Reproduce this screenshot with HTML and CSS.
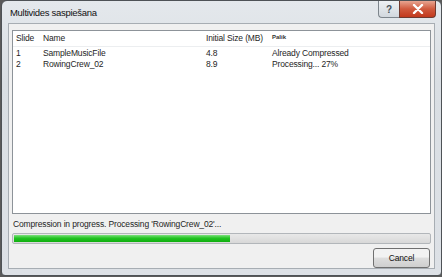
FILE: index.html
```html
<!DOCTYPE html>
<html>
<head>
<meta charset="utf-8">
<link rel="stylesheet" href="styles.css">
</head>
<body>
<div class="window">
  <div class="titlebar">
    <div class="title">Multivides saspiešana</div>
    <div class="caption-buttons">
      <div class="cap-btn help">?</div>
      <div class="cap-btn close">
        <svg width="12" height="10" viewBox="0 0 12 10"><path d="M2 1 L10 9 M10 1 L2 9" stroke="#fff" stroke-width="2.4" stroke-linecap="round"/></svg>
      </div>
    </div>
  </div>
  <div class="client">
    <div class="listbox">
      <div class="row header">
        <span class="c-slide">Slide</span>
        <span class="c-name">Name</span>
        <span class="c-size">Initial Size (MB)</span>
        <span class="c-status small">Palik</span>
      </div>
      <div class="row">
        <span class="c-slide">1</span>
        <span class="c-name">SampleMusicFile</span>
        <span class="c-size">4.8</span>
        <span class="c-status">Already Compressed</span>
      </div>
      <div class="row">
        <span class="c-slide">2</span>
        <span class="c-name">RowingCrew_02</span>
        <span class="c-size">8.9</span>
        <span class="c-status">Processing... 27%</span>
      </div>
    </div>
    <div class="status">Compression in progress. Processing 'RowingCrew_02'...</div>
    <div class="progress"><div class="fill" style="width:52%"></div></div>
    <div class="actions"><button class="btn">Cancel</button></div>
  </div>
</div>
</body>
</html>
```

FILE: styles.css
```css
html, body { margin: 0; padding: 0; }
body {
  width: 442px; height: 277px;
  background: #5a5a5a;
  font-family: "Liberation Sans", Arial, sans-serif;
  font-size: 8.5px;
  letter-spacing: -0.15px;
  color: #1e1e1e;
  overflow: hidden;
}
.window {
  box-sizing: border-box;
  width: 441px; height: 276px;
  margin-left: 1px;
  border: 1px solid #4e5256;
  border-radius: 6px 6px 4px 4px;
  background: linear-gradient(#e4e8ec, #d9dee3 30%, #dde1e6);
  display: flex; flex-direction: column;
}
.titlebar {
  height: 22px;
  display: flex;
  align-items: flex-start;
  justify-content: space-between;
}
.title {
  padding: 5px 0 0 8px;
  font-size: 9.5px;
  letter-spacing: -0.3px;
  line-height: 14px;
  color: #111;
}
.caption-buttons { display: flex; margin-right: 5px; }
.cap-btn {
  height: 17px;
  box-sizing: border-box;
  border: 1px solid #7d858c;
  border-top: none;
  display: flex; align-items: center; justify-content: center;
}
.help {
  width: 21px;
  border-radius: 0 0 0 4px;
  background: linear-gradient(#eef1f4, #d2d8de);
  color: #46505a; font-weight: bold; font-size: 10px;
  border-right: none;
}
.close {
  width: 37px;
  border-radius: 0 0 4px 0;
  background: linear-gradient(#e8a591, #d05a3e 50%, #c2391d);
  border-color: #6f3a30;
}
.client {
  flex: 1;
  margin: 0 6px 6px 6px;
  border: 1px solid #a7adb3;
  background: #f0f0f0;
  display: flex; flex-direction: column;
  padding: 6px 3px 0 3px;
}
.listbox {
  height: 181px;
  border: 1px solid #8d9399;
  background: #fff;
  padding-top: 1px;
}
.row {
  display: flex;
  height: 11px;
  line-height: 11px;
  white-space: nowrap;
}
.row.header {
  height: 14px;
  line-height: 13px;
  border-bottom: 1px solid #eceef0;
  margin-bottom: 1px;
}
.c-slide { width: 30px; padding-left: 3px; box-sizing: border-box; }
.c-name { width: 163px; }
.c-size { width: 66px; }
.c-status { flex: 1; }
.small { font-size: 6px; font-weight: bold; color: #333; line-height: 10px; letter-spacing: 0; }
.status {
  margin-top: 4px;
  height: 12px;
  line-height: 12px;
  padding-left: 1px;
}
.progress {
  margin-top: 3px;
  height: 11px;
  box-sizing: border-box;
  border: 1px solid #b2b6ba;
  background: linear-gradient(#e8e8e8, #d8d8d8);
  padding: 1px;
  border-radius: 2px;
}
.fill {
  height: 100%;
  background: linear-gradient(#7de07d, #22c322 45%, #0fae0f);
}
.actions {
  display: flex; justify-content: flex-end;
  padding: 4px 1px 0 0;
}
.btn {
  width: 57px; height: 20px;
  font-family: inherit; font-size: 8.5px;
  letter-spacing: -0.15px;
  border: 1px solid #707070;
  border-radius: 3px;
  background: linear-gradient(#f2f2f2 45%, #dddddd 50%, #cfcfcf);
  color: #111;
  padding: 0;
}
```
